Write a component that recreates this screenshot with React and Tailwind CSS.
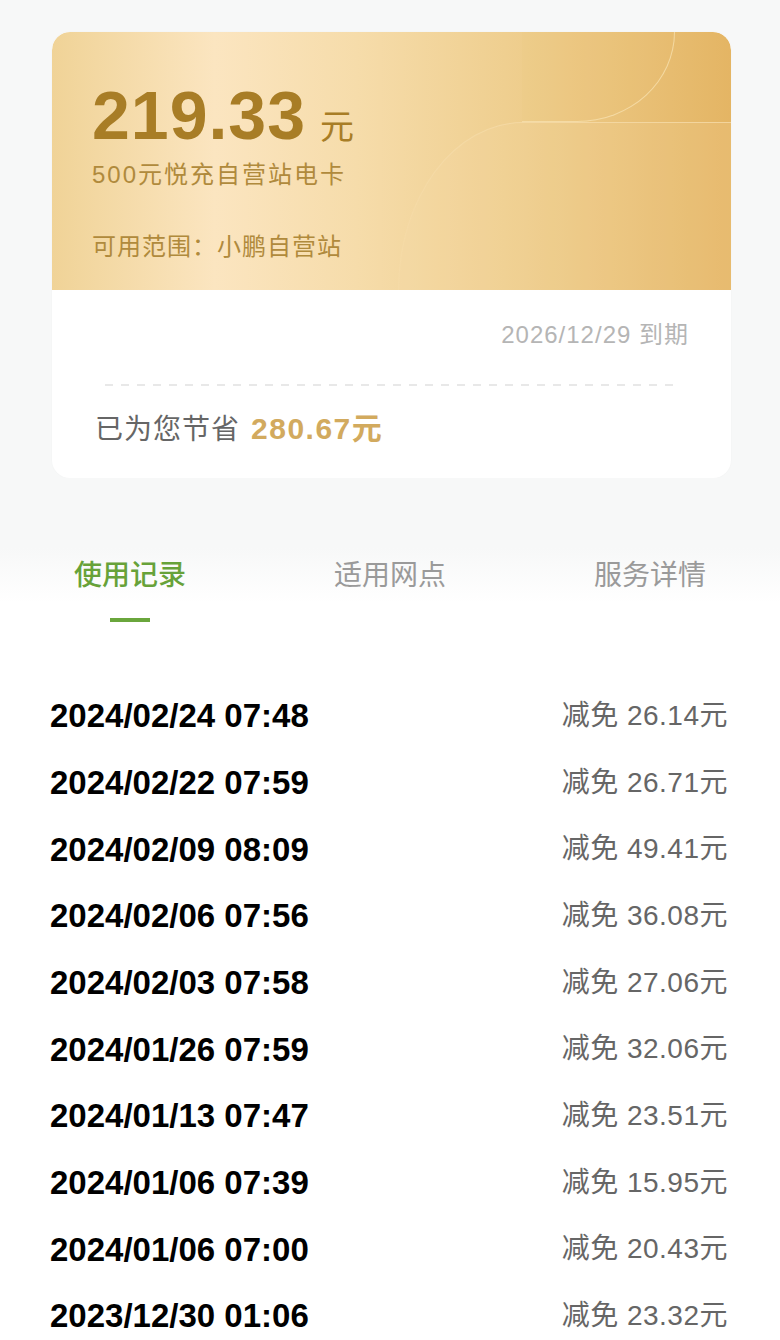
import React from "react";

const records = [
  ["2024/02/24 07:48", "26.14"],
  ["2024/02/22 07:59", "26.71"],
  ["2024/02/09 08:09", "49.41"],
  ["2024/02/06 07:56", "36.08"],
  ["2024/02/03 07:58", "27.06"],
  ["2024/01/26 07:59", "32.06"],
  ["2024/01/13 07:47", "23.51"],
  ["2024/01/06 07:39", "15.95"],
  ["2024/01/06 07:00", "20.43"],
  ["2023/12/30 01:06", "23.32"],
];

const FONT = "font-['Liberation_Sans','Noto_Sans_CJK_SC',sans-serif]";

export default function App() {
  return (
    <div className={`w-[780px] h-[1340px] overflow-hidden bg-white ${FONT}`}>
      <div className="bg-[#f7f8f8] pt-[32px] pb-[64px]">
        <div className="ml-[52px] w-[679px] rounded-[18px] bg-white overflow-hidden shadow-[0_0_2px_rgba(0,0,0,0.03)]">
          {/* gold header */}
          <div className="relative h-[258px] overflow-hidden rounded-t-[18px] bg-[linear-gradient(90deg,#f0d397_0%,#fbe5c0_24%,#f6dcaa_45%,#eecd8c_70%,#e4b564_100%)] px-[40px] pt-[49px]">
            <div className="absolute left-[470px] top-0 h-[90px] w-[153px] rounded-br-[98px_90px] border-b border-r border-[#f8e0ae]/80 bg-[#eac27a]/10" />
            <div className="absolute left-[346px] top-[90px] h-[200px] w-[400px] rounded-tl-[125px_168px] border-t border-l border-[#f5dba8]/80 bg-[#f8dfae]/15" />
            <div className="relative flex items-baseline">
              <span className="text-[68px] leading-[68px] font-bold tracking-[1px] text-[#a87d26] font-['Liberation_Sans',sans-serif]">
                219.33
              </span>
              <span className="ml-[14px] text-[34px] leading-[40px] text-[#a87d26]">元</span>
            </div>
            <div className="relative mt-[10px] text-[24px] leading-[32px] tracking-[2px] text-[#b08a3c]">
              500元悦充自营站电卡
            </div>
            <div className="relative mt-[40px] text-[24px] leading-[32px] tracking-[1px] text-[#b08a3c]">
              可用范围：小鹏自营站
            </div>
          </div>
          {/* white bottom */}
          <div className="pt-[30px] pb-[30px]">
            <div className="pr-[42px] text-right text-[24px] leading-[30px] tracking-[1px] text-[#b5b5b5]">
              2026/12/29 到期
            </div>
            <div className="mx-[53px] mt-[34px] h-[2px] bg-[repeating-linear-gradient(90deg,#e8e8e8_0_8px,transparent_8px_16px)]" />
            <div className="mt-[25px] flex items-baseline pl-[43px] text-[28px] leading-[36px] text-[#666666]">
              <span className="tracking-[1px]">已为您节省</span>
              <span className="ml-[11px] text-[30px] font-bold tracking-[1.5px] text-[#d2aa5e]">280.67元</span>
            </div>
          </div>
        </div>
      </div>

      {/* tabs */}
      <div className="-mt-[64px] bg-[linear-gradient(180deg,#f7f8f8_70px,#ffffff_125px)] pt-[78px]">
        <div className="grid grid-cols-3">
          <div className="flex flex-col items-center">
            <div className="text-[28px] leading-[40px] font-medium text-[#67a239]">使用记录</div>
            <div className="mt-[22px] h-[4px] w-[40px] bg-[#6aa63c]" />
          </div>
          <div className="flex flex-col items-center">
            <div className="text-[28px] leading-[40px] text-[#9a9a9a]">适用网点</div>
          </div>
          <div className="flex flex-col items-center">
            <div className="text-[28px] leading-[40px] text-[#9a9a9a]">服务详情</div>
          </div>
        </div>
      </div>

      {/* list */}
      <div className="mt-[60.7px] pl-[50px] pr-[52px]">
        {records.map(([d, v], i) => (
          <div key={i} className="flex h-[66.67px] items-center justify-between">
            <span className="text-[33px] font-bold text-black font-['Liberation_Sans',sans-serif]">{d}</span>
            <span className="text-[28px] tracking-[0.5px] text-[#666666]">减免 {v}元</span>
          </div>
        ))}
      </div>
    </div>
  );
}
